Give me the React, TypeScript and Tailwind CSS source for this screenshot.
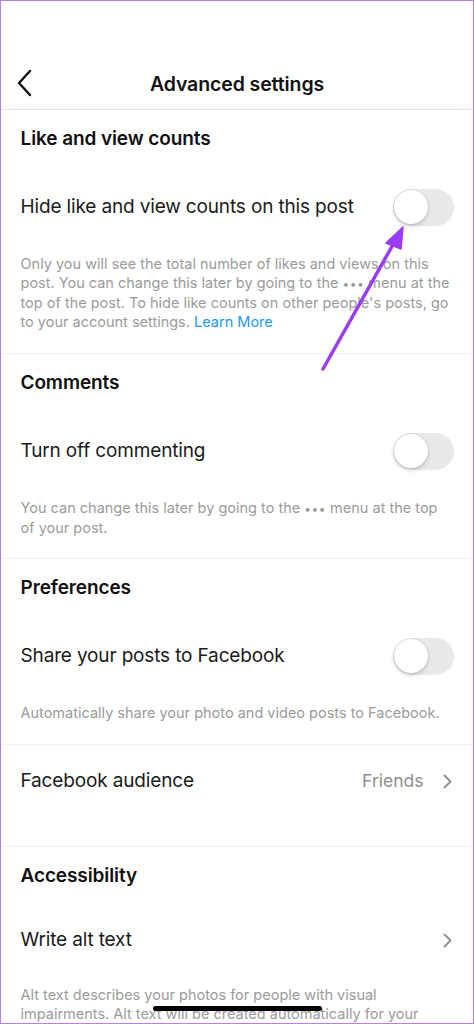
import React from "react";

const font = { fontFamily: "Inter, 'Noto Sans', sans-serif" };

function Toggle() {
  return (
    <div className="relative w-[61px] h-[37px] rounded-full bg-[#e9e9eb] shrink-0">
      <div className="absolute left-[1.5px] top-[1.5px] w-[34px] h-[34px] rounded-full bg-white shadow-[0_2px_4px_rgba(0,0,0,0.18),0_0_0_0.5px_rgba(0,0,0,0.08)]" />
    </div>
  );
}

function Chevron() {
  return (
    <svg width="9" height="15" viewBox="0 0 9 15" className="shrink-0">
      <path d="M1.5 1.5 L7.5 7.5 L1.5 13.5" fill="none" stroke="#8e8e8e" strokeWidth="1.8" strokeLinecap="round" strokeLinejoin="round" />
    </svg>
  );
}

function SectionHeader({ children }: { children: React.ReactNode }) {
  return (
    <div className="h-[58px] flex items-center pl-[19.5px] text-[19px] font-semibold text-[#111] tracking-[-0.1px]">
      {children}
    </div>
  );
}

function Row({ label, right, h = "h-[78px]" }: { label: string; right: React.ReactNode; h?: string }) {
  return (
    <div className={`${h} flex items-center justify-between pl-[19.5px] pr-[19.5px]`}>
      <span className="text-[19px] text-[#1a1a1a] tracking-[-0.15px]">{label}</span>
      {right}
    </div>
  );
}

function Desc({ lines, pt = "pt-[8px]" }: { lines: React.ReactNode[]; pt?: string }) {
  return (
    <div className={`${pt} pl-[19.5px] text-[14.5px] leading-[19px] text-[#9b9b9b]`}>
      {lines.map((l, i) => (
        <div key={i} className="whitespace-nowrap">
          {l}
        </div>
      ))}
    </div>
  );
}

const Dots = () => <span className="text-[12px] tracking-[0.5px]">•••</span>;

export default function App() {
  return (
    <div style={font} className="relative w-[474px] h-[1024px] overflow-hidden bg-white border-[1.5px] border-[#b97df3]">
      {/* Header */}
      <div className="h-[109px] border-b border-[#e3e3e3] flex flex-col justify-end">
        <div className="h-[54px] flex items-center relative pt-[5px]">
          <div className="absolute left-[15px] top-[14px]">
            <svg width="18" height="28" viewBox="0 0 18 28">
              <path d="M14 2 L3 14 L14 26" fill="none" stroke="#111" strokeWidth="2.4" strokeLinecap="round" strokeLinejoin="round" />
            </svg>
          </div>
          <div className="flex-1 text-center text-[19.5px] font-semibold text-[#111] tracking-[-0.1px]">Advanced settings</div>
        </div>
      </div>

      {/* Like and view counts */}
      <div className="pb-[22px] border-b border-[#efefef]">
        <SectionHeader>Like and view counts</SectionHeader>
        <Row label="Hide like and view counts on this post" right={<Toggle />} />
        <Desc
          lines={[
            "Only you will see the total number of likes and views on this",
            <>post. You can change this later by going to the <Dots /> menu at the</>,
            "top of the post. To hide like counts on other people's posts, go",
            <>to your account settings. <span className="text-[#1a9af3]">Learn More</span></>,
          ]}
        />
      </div>

      {/* Comments */}
      <div className="pb-[21px] border-b border-[#efefef]">
        <SectionHeader>Comments</SectionHeader>
        <Row label="Turn off commenting" right={<Toggle />} />
        <Desc
          lines={[
            <>You can change this later by going to the <Dots /> menu at the top</>,
            "of your post.",
          ]}
        />
      </div>

      {/* Preferences */}
      <div className="pb-[22px] border-b border-[#efefef]">
        <SectionHeader>Preferences</SectionHeader>
        <Row label="Share your posts to Facebook" right={<Toggle />} />
        <Desc lines={["Automatically share your photo and video posts to Facebook."]} />
      </div>

      {/* Facebook audience */}
      <div className="pb-[29px] border-b border-[#efefef]">
        <Row
          label="Facebook audience"
          h="h-[72px]"
          right={
            <div className="flex items-center gap-[19px] pr-[2px]">
              <span className="text-[17.5px] text-[#8e8e8e]">Friends</span>
              <Chevron />
            </div>
          }
        />
      </div>

      {/* Accessibility */}
      <div>
        <SectionHeader>Accessibility</SectionHeader>
        <Row label="Write alt text" h="h-[70px]" right={<div className="pr-[2px]"><Chevron /></div>} />
        <Desc
          pt="pt-[10px]"
          lines={[
            "Alt text describes your photos for people with visual",
            "impairments. Alt text will be created automatically for your",
          ]}
        />
      </div>

      {/* Home indicator */}
      <div className="absolute left-[152px] top-[1005px] w-[169px] h-[5px] rounded-full bg-black" />

      {/* Annotation arrow */}
      <svg className="absolute left-0 top-0 pointer-events-none" width="474" height="1024">
        <line x1="322" y1="368" x2="394" y2="240" stroke="#9a3cf2" strokeWidth="3.5" strokeLinecap="round" />
        <polygon points="402,226 385,242 400,248" fill="#9a3cf2" stroke="#9a3cf2" strokeWidth="1.5" strokeLinejoin="round" />
      </svg>
    </div>
  );
}
